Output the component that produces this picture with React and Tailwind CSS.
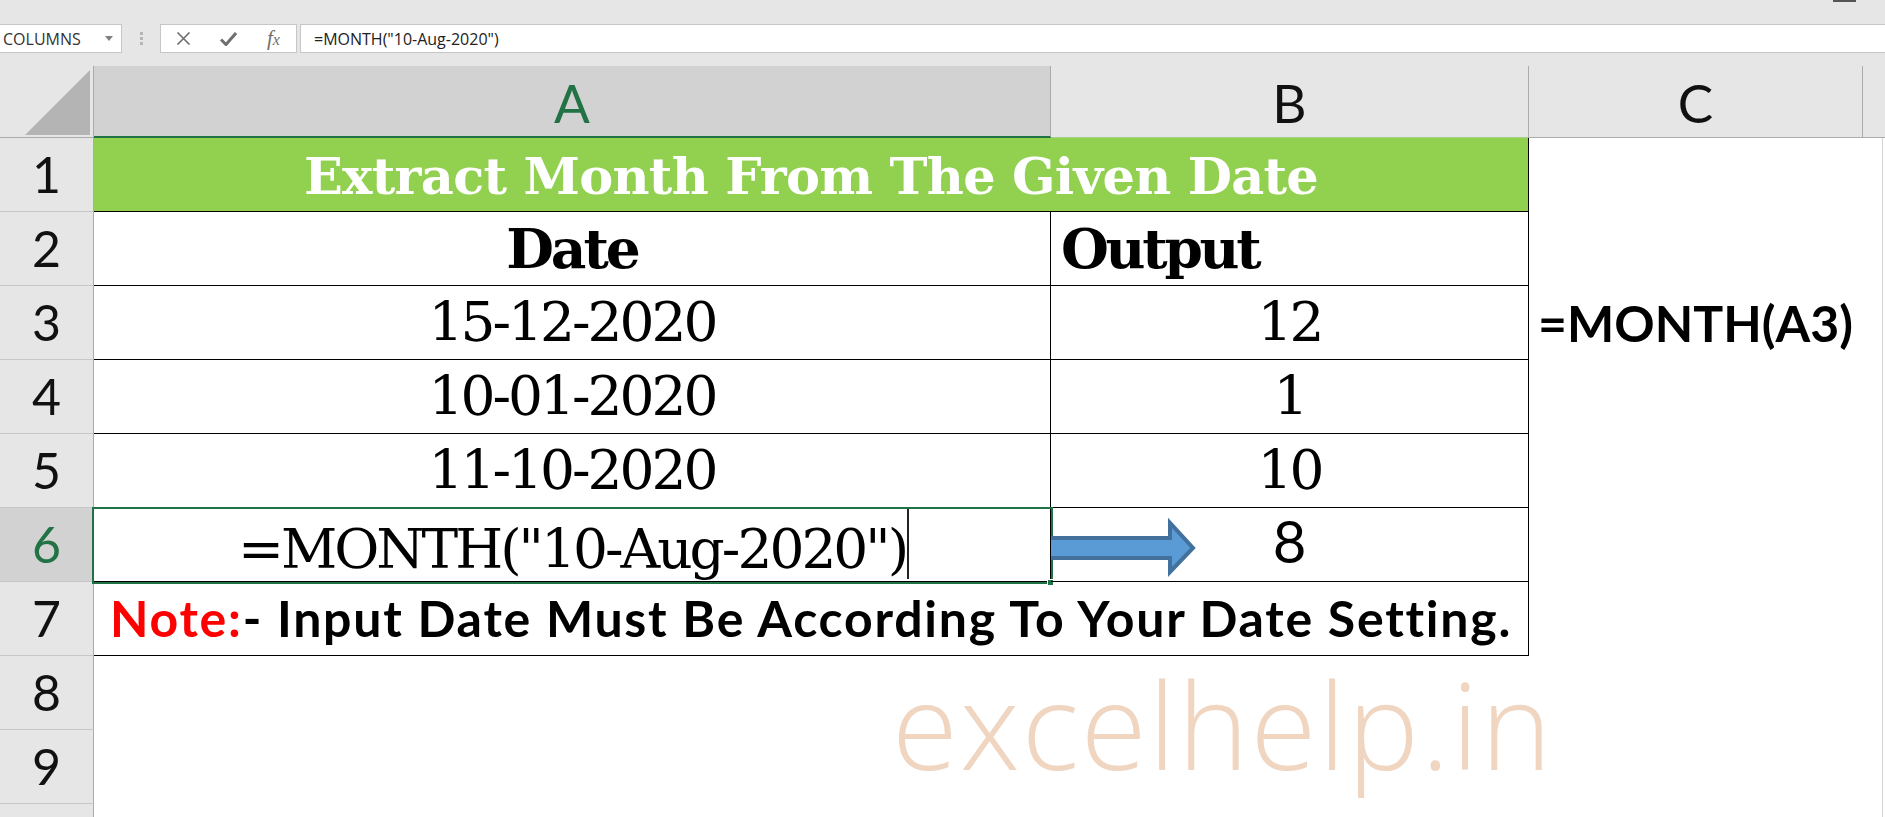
import React from "react";

function RH({ n, sel }) {
  return (
    <div
      className={`w-[94px] shrink-0 h-full border-r border-r-[#ababab] border-b border-b-[#c6c6c6] flex items-end justify-center pb-[12px] font-['Lato',sans-serif] text-[50px] leading-none ${
        sel ? "bg-[#d2d2d2] text-[#217346]" : "bg-[#e6e6e6] text-[#111]"
      }`}
    >
      {n}
    </div>
  );
}

function D() {
  return <div className="w-[20px] shrink-0 h-full border-r border-r-[#d4d4d4]" />;
}

const valA =
  "w-[957px] shrink-0 h-full border-b border-r border-black flex items-end justify-center pb-[9px] font-['DejaVu_Serif',serif] text-[55px] leading-none tracking-[-3px] text-black whitespace-nowrap";
const valB =
  "w-[478px] shrink-0 h-full border-b border-r border-black flex items-end justify-center pb-[9px] font-['DejaVu_Serif',serif] text-[55px] leading-none tracking-[-3px] text-black whitespace-nowrap";

export default function App() {
  return (
    <div className="w-[1885px] h-[817px] overflow-hidden bg-white relative">
      {/* top strip */}
      <div className="h-[24px] bg-[#e6e6e6] flex justify-end items-start pr-[29px]">
        <div className="w-[23px] h-[2px] bg-[#555]" />
      </div>

      {/* formula bar */}
      <div className="h-[29px] bg-[#e6e6e6] flex">
        <div className="w-[122px] shrink-0 bg-white border border-l-0 border-[#c6c6c6] flex items-center justify-between pl-[3px] pr-[8px]">
          <span className="font-['Open_Sans',sans-serif] text-[16px] leading-none text-[#333]">COLUMNS</span>
          <svg width="8" height="5" viewBox="0 0 8 5">
            <path d="M0 0h8L4 5z" fill="#808080" />
          </svg>
        </div>
        <div className="w-[38px] shrink-0 flex flex-col items-center justify-center gap-[2px]">
          <div className="w-[3px] h-[3px] bg-[#b5b5b5]" />
          <div className="w-[3px] h-[3px] bg-[#b5b5b5]" />
          <div className="w-[3px] h-[3px] bg-[#b5b5b5]" />
        </div>
        <div className="w-[137px] shrink-0 bg-white border border-[#c6c6c6] flex items-center">
          <div className="w-[45px] flex justify-center">
            <svg width="15" height="13" viewBox="0 0 15 13">
              <path d="M1.5 0.5L13.5 12.5M13.5 0.5L1.5 12.5" stroke="#6f6f6f" strokeWidth="1.6" />
            </svg>
          </div>
          <div className="w-[45px] flex justify-center">
            <svg width="17" height="14" viewBox="0 0 17 14">
              <path d="M1 7.5L6 12.5L16 1" stroke="#6f6f6f" strokeWidth="3" fill="none" />
            </svg>
          </div>
          <div className="w-[45px] flex justify-center">
            <span className="font-['Liberation_Serif',serif] italic text-[21px] leading-none text-[#6f6f6f]">
              f<span className="text-[16px]">x</span>
            </span>
          </div>
        </div>
        <div className="w-[3px] shrink-0" />
        <div className="flex-1 bg-white border border-r-0 border-[#c6c6c6] flex items-center pl-[13px]">
          <span className="font-['Open_Sans',sans-serif] text-[16px] leading-none text-[#222]">
            =MONTH("10-Aug-2020")
          </span>
        </div>
      </div>

      <div className="h-[13px] bg-[#e6e6e6]" />

      {/* column headers */}
      <div className="h-[72px] flex font-['Lato',sans-serif] text-[53px] leading-none">
        <div className="w-[94px] shrink-0 h-full bg-[#e6e6e6] border-r border-b border-[#ababab] relative">
          <svg className="absolute left-0 top-0" width="93" height="71" viewBox="0 0 93 71">
            <path d="M25 69L90 4V69Z" fill="#b4b4b4" />
          </svg>
        </div>
        <div className="w-[957px] shrink-0 h-full bg-[#d2d2d2] border-r border-r-[#ababab] border-b-2 border-b-[#217346] flex items-end justify-center pb-[7px] text-[#217346]">
          A
        </div>
        <div className="w-[478px] shrink-0 h-full bg-[#e6e6e6] border-r border-r-[#ababab] border-b border-b-[#a3d08a] flex items-end justify-center pb-[8px] text-[#111]">
          B
        </div>
        <div className="w-[334px] shrink-0 h-full bg-[#e6e6e6] border-r border-r-[#ababab] border-b border-b-[#ababab] flex items-end justify-center pb-[8px] text-[#111]">
          C
        </div>
        <div className="flex-1 h-full bg-[#e6e6e6] border-b border-[#ababab]" />
      </div>

      {/* row 1 */}
      <div className="h-[74px] flex">
        <RH n={1} />
        <div className="w-[1435px] shrink-0 h-full bg-[#92d050] border-b border-r border-black flex items-end justify-center pb-[9px] font-['DejaVu_Serif',serif] font-bold text-[51px] leading-none tracking-[-0.7px] text-white whitespace-nowrap">
          Extract Month From The Given Date
        </div>
        <div className="w-[334px] shrink-0" />
        <D />
      </div>

      {/* row 2 */}
      <div className="h-[74px] flex">
        <RH n={2} />
        <div className="w-[957px] shrink-0 h-full border-b border-r border-black flex items-end justify-center pb-[9px] font-['DejaVu_Serif',serif] font-bold text-[55px] leading-none tracking-[-3px] text-black">
          Date
        </div>
        <div className="w-[478px] shrink-0 h-full border-b border-r border-black flex items-end justify-start pl-[10px] pb-[9px] font-['DejaVu_Serif',serif] font-bold text-[55px] leading-none tracking-[-3.3px] text-black">
          Output
        </div>
        <div className="w-[334px] shrink-0" />
        <D />
      </div>

      {/* row 3 */}
      <div className="h-[74px] flex">
        <RH n={3} />
        <div className={valA}>15-12-2020</div>
        <div className={valB}>12</div>
        <div className="w-[334px] shrink-0 h-full flex items-end pl-[9px] pb-[12px] font-['Lato',sans-serif] font-bold text-[50px] leading-none text-black whitespace-nowrap">
          =MONTH(A3)
        </div>
        <D />
      </div>

      {/* row 4 */}
      <div className="h-[74px] flex">
        <RH n={4} />
        <div className={valA}>10-01-2020</div>
        <div className={valB}>1</div>
        <div className="w-[334px] shrink-0" />
        <D />
      </div>

      {/* row 5 */}
      <div className="h-[74px] flex">
        <RH n={5} />
        <div className={valA}>11-10-2020</div>
        <div className={valB}>10</div>
        <div className="w-[334px] shrink-0" />
        <D />
      </div>

      {/* row 6 */}
      <div className="h-[74px] flex">
        <RH n={6} sel />
        <div className="w-[957px] shrink-0 h-full border-b border-r border-black relative flex items-end justify-center pb-[4px] font-['DejaVu_Serif',serif] text-[55px] leading-none tracking-[-3px] text-black whitespace-nowrap">
          =MONTH("10-Aug-2020")
          <div className="absolute left-[-2px] top-[-1px] w-[961px] h-[77px] border-2 border-[#217346]" />
          <div className="absolute left-[813px] top-[1px] w-[2px] h-[70px] bg-[#222]" />
          <div className="absolute left-[953px] top-[71px] w-[7px] h-[7px] bg-[#217346] border border-white" />
        </div>
        <div className="w-[478px] shrink-0 h-full border-b border-r border-black relative flex items-end justify-center pb-[11px] font-['Lato',sans-serif] text-[58px] leading-none text-black">
          <svg className="absolute left-0 top-0" width="150" height="74" viewBox="0 0 150 74">
            <path
              d="M-2 30H119V15L142 40L119 64V50H-2Z"
              fill="#5b9bd5"
              stroke="#41719c"
              strokeWidth="4"
            />
          </svg>
          8
        </div>
        <div className="w-[334px] shrink-0" />
        <D />
      </div>

      {/* row 7 */}
      <div className="h-[74px] flex">
        <RH n={7} />
        <div className="w-[1435px] shrink-0 h-full border-b border-r border-black flex items-end justify-center pb-[12px] font-['Lato',sans-serif] font-bold text-[50px] leading-none tracking-[1.75px] text-black whitespace-nowrap">
          <span className="text-[#ff0000]">Note:</span>- Input Date Must Be According To Your Date Setting.
        </div>
        <div className="w-[334px] shrink-0" />
        <D />
      </div>

      {/* rows 8-10 */}
      <div className="h-[74px] flex">
        <RH n={8} />
        <div className="w-[1769px] shrink-0" />
        <D />
      </div>
      <div className="h-[74px] flex">
        <RH n={9} />
        <div className="w-[1769px] shrink-0" />
        <D />
      </div>
      <div className="h-[74px] flex">
        <RH n="" />
        <div className="w-[1769px] shrink-0" />
        <D />
      </div>

      {/* watermark */}
      <div className="absolute left-[892px] top-[664px] font-['Open_Sans',sans-serif] font-light text-[120px] leading-none tracking-[2px] text-[#f0d5c1] whitespace-nowrap pointer-events-none">
        excelhelp.in
      </div>
    </div>
  );
}
